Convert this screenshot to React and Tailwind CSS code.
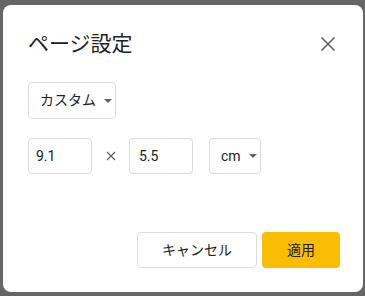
const Caret = () => (
  <svg width="8" height="4" viewBox="0 0 8 4" className="shrink-0">
    <path d="M0 0 L8 0 L4 4 Z" fill="#5f6368" />
  </svg>
);

const App = () => {
  return (
    <div className="h-[296px] w-[365px] overflow-hidden bg-[#666666] pl-[3px] pt-[5px] font-['Roboto','Noto_Sans_CJK_JP',sans-serif] text-[#202124]">
      <div className="flex h-[287px] w-[360px] flex-col rounded-lg bg-white pl-[25px] pr-[23px] pt-[25px] pb-[24px]">
        {/* header */}
        <div className="flex h-7 items-center justify-between">
          <div className="text-[21px] leading-7">ページ設定</div>
          <svg width="24" height="24" viewBox="0 0 24 24">
            <path d="M5.5 5.5 L18.5 18.5 M18.5 5.5 L5.5 18.5" stroke="#5f6368" strokeWidth="1.6" />
          </svg>
        </div>

        {/* paper size */}
        <div className="mt-[24px] flex h-[37px] w-[88px] items-center gap-[8px] rounded border border-[#dadce0] pl-[11px] text-[14px]">
          <span>カスタム</span>
          <Caret />
        </div>

        {/* dimensions */}
        <div className="mt-[19px] flex h-[36px] items-center">
          <div className="flex h-full w-[64px] items-center rounded border border-[#dadce0] pl-[7px] text-[14px]">
            9.1
          </div>
          <div className="flex w-[37px] justify-center">
            <svg width="10" height="10" viewBox="0 0 10 10">
              <path d="M1 1 L9 9 M9 1 L1 9" stroke="#5f6368" strokeWidth="1.2" />
            </svg>
          </div>
          <div className="flex h-full w-[64px] items-center rounded border border-[#dadce0] pl-[9px] text-[14px]">
            5.5
          </div>
          <div className="ml-[16px] flex h-full w-[52px] items-center gap-[8px] rounded border border-[#dadce0] pl-[11px] text-[14px]">
            <span>cm</span>
            <Caret />
          </div>
        </div>

        {/* actions */}
        <div className="mt-auto flex justify-end gap-[5px]">
          <button className="h-[36px] w-[120px] rounded border border-[#dadce0] bg-white text-[14px]">
            キャンセル
          </button>
          <button className="h-[36px] w-[78px] rounded bg-[#fbbc04] text-[14px]">
            適用
          </button>
        </div>
      </div>
    </div>
  );
};

export default App;
